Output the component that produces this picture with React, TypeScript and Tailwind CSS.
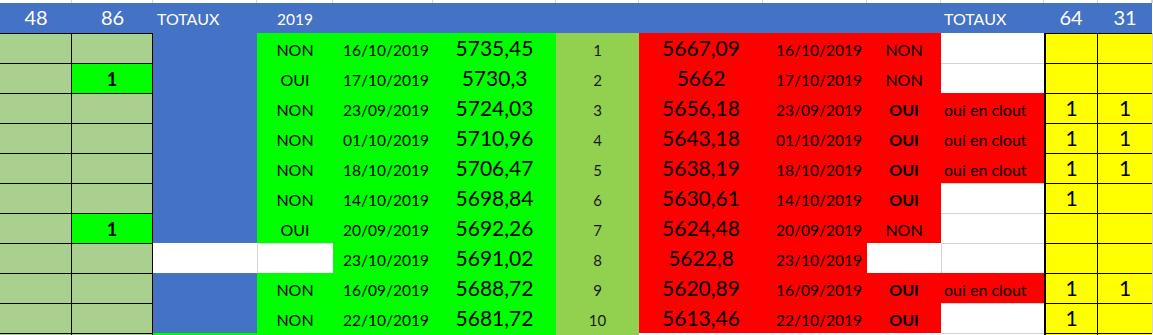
import React from "react";

type Row = {
  b1?: boolean;
  cWhite?: boolean;
  d: string;
  e: string;
  f: string;
  g: string;
  h: string;
  i: string;
  j: string;
  jBold?: boolean;
  k: string;
  l: string;
  m: string;
};

const rows: Row[] = [
  { d: "NON", e: "16/10/2019", f: "5735,45", g: "1", h: "5667,09", i: "16/10/2019", j: "NON", k: "", l: "", m: "" },
  { b1: true, d: "OUI", e: "17/10/2019", f: "5730,3", g: "2", h: "5662", i: "17/10/2019", j: "NON", k: "", l: "", m: "" },
  { d: "NON", e: "23/09/2019", f: "5724,03", g: "3", h: "5656,18", i: "23/09/2019", j: "OUI", jBold: true, k: "oui en clout", l: "1", m: "1" },
  { d: "NON", e: "01/10/2019", f: "5710,96", g: "4", h: "5643,18", i: "01/10/2019", j: "OUI", jBold: true, k: "oui en clout", l: "1", m: "1" },
  { d: "NON", e: "18/10/2019", f: "5706,47", g: "5", h: "5638,19", i: "18/10/2019", j: "OUI", jBold: true, k: "oui en clout", l: "1", m: "1" },
  { d: "NON", e: "14/10/2019", f: "5698,84", g: "6", h: "5630,61", i: "14/10/2019", j: "OUI", jBold: true, k: "", l: "1", m: "" },
  { b1: true, d: "OUI", e: "20/09/2019", f: "5692,26", g: "7", h: "5624,48", i: "20/09/2019", j: "NON", k: "", l: "", m: "" },
  { cWhite: true, d: "", e: "23/10/2019", f: "5691,02", g: "8", h: "5622,8", i: "23/10/2019", j: "", k: "", l: "", m: "" },
  { d: "NON", e: "16/09/2019", f: "5688,72", g: "9", h: "5620,89", i: "16/09/2019", j: "OUI", jBold: true, k: "oui en clout", l: "1", m: "1" },
  { d: "NON", e: "22/10/2019", f: "5681,72", g: "10", h: "5613,46", i: "22/10/2019", j: "OUI", jBold: true, k: "", l: "1", m: "" },
];

const cols = "grid grid-cols-[72px_81px_104px_76px_100px_123px_83px_124px_104px_74px_103px_54px_54px_1px]";

function Cell({ className = "", children }: { className?: string; children?: React.ReactNode }) {
  return <div className={`h-[30px] flex items-end pb-[5px] leading-none ${className}`}>{children}</div>;
}

export default function App() {
  return (
    <div className="w-[1153px] h-[335px] overflow-hidden bg-white font-[Lato,sans-serif] text-black">
      {/* top strip with gridlines */}
      <div className={cols}>
        {Array.from({ length: 14 }).map((_, i) => (
          <div key={i} className="h-[3px] border-r border-[#d4d4d4]" />
        ))}
      </div>

      {/* header row */}
      <div className={`${cols} text-white`}>
        <Cell className="bg-[#4472c4] justify-center text-[20px] pb-[6px]">48</Cell>
        <Cell className="bg-[#4472c4] justify-center text-[20px] pb-[6px]">86</Cell>
        <Cell className="bg-[#4472c4] pl-[4px] text-[16px] pb-[6px]">TOTAUX</Cell>
        <Cell className="bg-[#4472c4] justify-center text-[15.5px] pb-[6px]">2019</Cell>
        <Cell className="bg-[#4472c4]" />
        <Cell className="bg-[#4472c4]" />
        <Cell className="bg-[#4472c4]" />
        <Cell className="bg-[#4472c4]" />
        <Cell className="bg-[#4472c4]" />
        <Cell className="bg-[#4472c4]" />
        <Cell className="bg-[#4472c4] pl-[3px] text-[16px] pb-[6px]">TOTAUX</Cell>
        <Cell className="bg-[#4472c4] justify-center text-[20px] pb-[6px]">64</Cell>
        <Cell className="bg-[#4472c4] justify-center text-[20px] pb-[6px]">31</Cell>
        <Cell className="bg-white" />
      </div>

      {rows.map((r, idx) => {
        const green = r.cWhite ? "bg-white border-t border-l border-[#d4d4d4]" : "bg-[#00ff00]";
        const kWhite = r.k === "";
        return (
          <div key={idx} className={cols}>
            <Cell className="bg-[#a9d08e] border-t border-r border-black" />
            <Cell
              className={`${r.b1 ? "bg-[#00ff00]" : "bg-[#a9d08e]"} border-t border-r border-black justify-center text-[18px] font-bold`}
            >
              {r.b1 ? "1" : ""}
            </Cell>
            <Cell className={r.cWhite ? "bg-white" : "bg-[#4472c4]"} />
            <Cell className={`${green} justify-center text-[16px]`}>{r.d}</Cell>
            <Cell className="bg-[#00ff00] justify-end pr-[4px] text-[15.5px]">{r.e}</Cell>
            <Cell className="bg-[#00ff00] justify-center text-[21px] pb-[5px]">{r.f}</Cell>
            <Cell className="bg-[#92d050] justify-center text-[15px] text-[#1a1a1a]">{r.g}</Cell>
            <Cell className="bg-[#ff0000] justify-center text-[21px] pb-[5px]">{r.h}</Cell>
            <Cell className="bg-[#ff0000] justify-end pr-[5px] text-[15.5px]">{r.i}</Cell>
            <Cell
              className={`${r.cWhite ? "bg-white" : "bg-[#ff0000]"} justify-center text-[16px] ${r.jBold ? "font-bold" : ""}`}
            >
              {r.j}
            </Cell>
            <Cell
              className={`${kWhite ? "bg-white" : "bg-[#ff0000]"} ${
                kWhite && idx > 0 ? "border-t border-[#d4d4d4]" : ""
              } ${r.cWhite ? "border-l border-[#d4d4d4]" : ""} pl-[3px] text-[16px]`}
            >
              {r.k}
            </Cell>
            <Cell className="bg-[#ffff00] border-t border-l-2 border-r border-black justify-center text-[21px] pb-[5px]">
              {r.l}
            </Cell>
            <Cell className="bg-[#ffff00] border-t border-black justify-center text-[21px] pb-[5px]">{r.m}</Cell>
            <div className="bg-white border-l border-[#d4d4d4]" />
          </div>
        );
      })}

      {/* start of next row */}
      <div className={cols}>
        <div className="h-[2px] bg-[#a9d08e] border-t border-r border-black" />
        <div className="h-[2px] bg-[#a9d08e] border-t border-r border-black" />
        <div className="h-[2px] bg-[#00ff00]" />
        <div className="h-[2px] bg-[#00ff00]" />
        <div className="h-[2px] bg-[#00ff00]" />
        <div className="h-[2px] bg-[#00ff00]" />
        <div className="h-[2px] bg-[#92d050]" />
        <div className="h-[2px] bg-white" />
        <div className="h-[2px] bg-white" />
        <div className="h-[2px] bg-white" />
        <div className="h-[2px] bg-white border-t border-[#d4d4d4]" />
        <div className="h-[2px] bg-[#ffff00] border-t border-l-2 border-r border-black" />
        <div className="h-[2px] bg-[#ffff00] border-t border-black" />
        <div className="h-[2px] bg-white" />
      </div>
    </div>
  );
}
